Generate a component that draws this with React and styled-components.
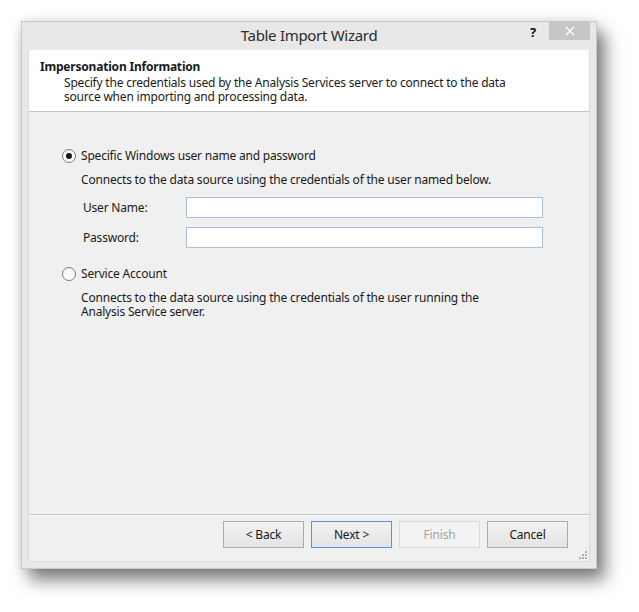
import React from "react";
import styled, { createGlobalStyle } from "styled-components";

const Global = createGlobalStyle`
  html, body { margin: 0; padding: 0; background: #ffffff; }
  body { font-family: "Noto Sans", "Open Sans", sans-serif; }
`;

const Page = styled.div`
  width: 639px;
  height: 612px;
  padding: 21px 0 0 21px;
  box-sizing: border-box;
`;

const Window = styled.div`
  width: 576px;
  height: 548px;
  box-sizing: border-box;
  border: 1px solid #c9c9c9;
  background: #e8e8e8;
  display: flex;
  flex-direction: column;
  padding: 0 6px 6px 6px;
  box-shadow: 8px 11px 16px rgba(0, 0, 0, 0.5), 0 0 10px rgba(0, 0, 0, 0.12);
  font-size: 12px;
  letter-spacing: -0.2px;
  color: #1a1a1a;
`;

const TitleBar = styled.div`
  height: 28px;
  position: relative;
  display: flex;
  align-items: center;
  justify-content: center;
`;

const Title = styled.div`
  font-size: 15px;
  letter-spacing: -0.3px;
  color: #2b2b2b;
  margin-top: -2px;
`;

const Controls = styled.div`
  position: absolute;
  right: 0;
  top: 0;
  display: flex;
  align-items: flex-start;
`;

const Help = styled.div`
  font-weight: bold;
  font-size: 13px;
  color: #111;
  width: 10px;
  margin-right: 9px;
  margin-top: 1px;
  line-height: 18px;
`;

const Close = styled.div`
  width: 41px;
  height: 18px;
  background: #c6c6c6;
  display: flex;
  align-items: center;
  justify-content: center;
`;

const Client = styled.div`
  flex: 1;
  display: flex;
  flex-direction: column;
  background: #f0f0f0;
  border: 1px solid #dadada;
  border-top: none;
`;

const Header = styled.div`
  background: #ffffff;
  height: 62px;
  box-sizing: border-box;
  border-bottom: 1px solid #c4c4c4;
  padding: 9px 0 0 11px;
`;

const HeaderTitle = styled.div`
  font-weight: bold;
  font-size: 12px;
  line-height: 15px;
`;

const HeaderDesc = styled.div`
  margin: 2px 0 0 24px;
  font-size: 12px;
  line-height: 14px;
  width: 470px;
`;

const Body = styled.div`
  flex: 1;
  border-bottom: 1px solid #c4c4c4;
  padding: 36px 0 0 33px;
  display: flex;
  flex-direction: column;
`;

const OptionRow = styled.label`
  display: flex;
  align-items: center;
  gap: 5px;
  line-height: 16px;
  margin-top: ${(p) => p.$mt || 0}px;
`;

const Radio = styled.span`
  width: 12px;
  height: 12px;
  border-radius: 50%;
  border: 1px solid #7b7b7b;
  background: linear-gradient(#f4f4f4, #ffffff);
  display: flex;
  align-items: center;
  justify-content: center;
  flex: none;
  &::after {
    content: "";
    width: 6px;
    height: 6px;
    border-radius: 50%;
    background: #1a1a1a;
    display: ${(p) => (p.$checked ? "block" : "none")};
  }
`;

const OptionDesc = styled.div`
  margin: ${(p) => p.$mt || 0}px 0 0 19px;
  line-height: 14px;
  width: 440px;
`;

const Fields = styled.div`
  margin: 10px 0 0 21px;
  display: grid;
  grid-template-columns: 103px 357px;
  row-gap: 9px;
  align-items: center;
`;

const FieldLabel = styled.div`
  line-height: 14px;
`;

const Input = styled.div`
  height: 21px;
  box-sizing: border-box;
  border: 1px solid #a8c0dc;
  background: #ffffff;
`;

const Footer = styled.div`
  height: 46px;
  border-top: 1px solid #fbfbfb;
  box-sizing: border-box;
  position: relative;
  display: flex;
  justify-content: flex-end;
  align-items: flex-start;
  padding: 5px 21px 0 0;
  gap: 7px;
`;

const Button = styled.div`
  width: 81px;
  height: 27px;
  box-sizing: border-box;
  border: 1px solid ${(p) => (p.$default ? "#4d95e5" : p.$disabled ? "#dadada" : "#acacac")};
  background: ${(p) => (p.$disabled ? "#f3f3f3" : "linear-gradient(#f2f2f2, #e4e4e4)")};
  color: ${(p) => (p.$disabled ? "#a2a2a2" : "#1a1a1a")};
  display: flex;
  align-items: center;
  justify-content: center;
  font-size: 12px;
`;

const Grip = styled.svg`
  position: absolute;
  right: 2px;
  bottom: 2px;
`;

export default function App() {
  return (
    <Page>
      <Global />
      <Window>
        <TitleBar>
          <Title>Table Import Wizard</Title>
          <Controls>
            <Help>?</Help>
            <Close>
              <svg width="10" height="10" viewBox="0 0 10 10">
                <path d="M1 1L9 9M9 1L1 9" stroke="#ffffff" strokeWidth="1.3" />
              </svg>
            </Close>
          </Controls>
        </TitleBar>
        <Client>
          <Header>
            <HeaderTitle>Impersonation Information</HeaderTitle>
            <HeaderDesc>
              Specify the credentials used by the Analysis Services server to connect to the data
              source when importing and processing data.
            </HeaderDesc>
          </Header>
          <Body>
            <OptionRow>
              <Radio $checked />
              <span>Specific Windows user name and password</span>
            </OptionRow>
            <OptionDesc $mt={9}>
              Connects to the data source using the credentials of the user named below.
            </OptionDesc>
            <Fields>
              <FieldLabel>User Name:</FieldLabel>
              <Input />
              <FieldLabel>Password:</FieldLabel>
              <Input />
            </Fields>
            <OptionRow $mt={18}>
              <Radio />
              <span>Service Account</span>
            </OptionRow>
            <OptionDesc $mt={9}>
              Connects to the data source using the credentials of the user running the
              Analysis Service server.
            </OptionDesc>
          </Body>
          <Footer>
            <Button>&lt; Back</Button>
            <Button $default>Next &gt;</Button>
            <Button $disabled>Finish</Button>
            <Button>Cancel</Button>
            <Grip width="8" height="8" viewBox="0 0 8 8">
              <g fill="#b0b0b0">
                <rect x="6" y="0" width="2" height="2" />
                <rect x="3" y="3" width="2" height="2" />
                <rect x="6" y="3" width="2" height="2" />
                <rect x="0" y="6" width="2" height="2" />
                <rect x="3" y="6" width="2" height="2" />
                <rect x="6" y="6" width="2" height="2" />
              </g>
            </Grip>
          </Footer>
        </Client>
      </Window>
    </Page>
  );
}
